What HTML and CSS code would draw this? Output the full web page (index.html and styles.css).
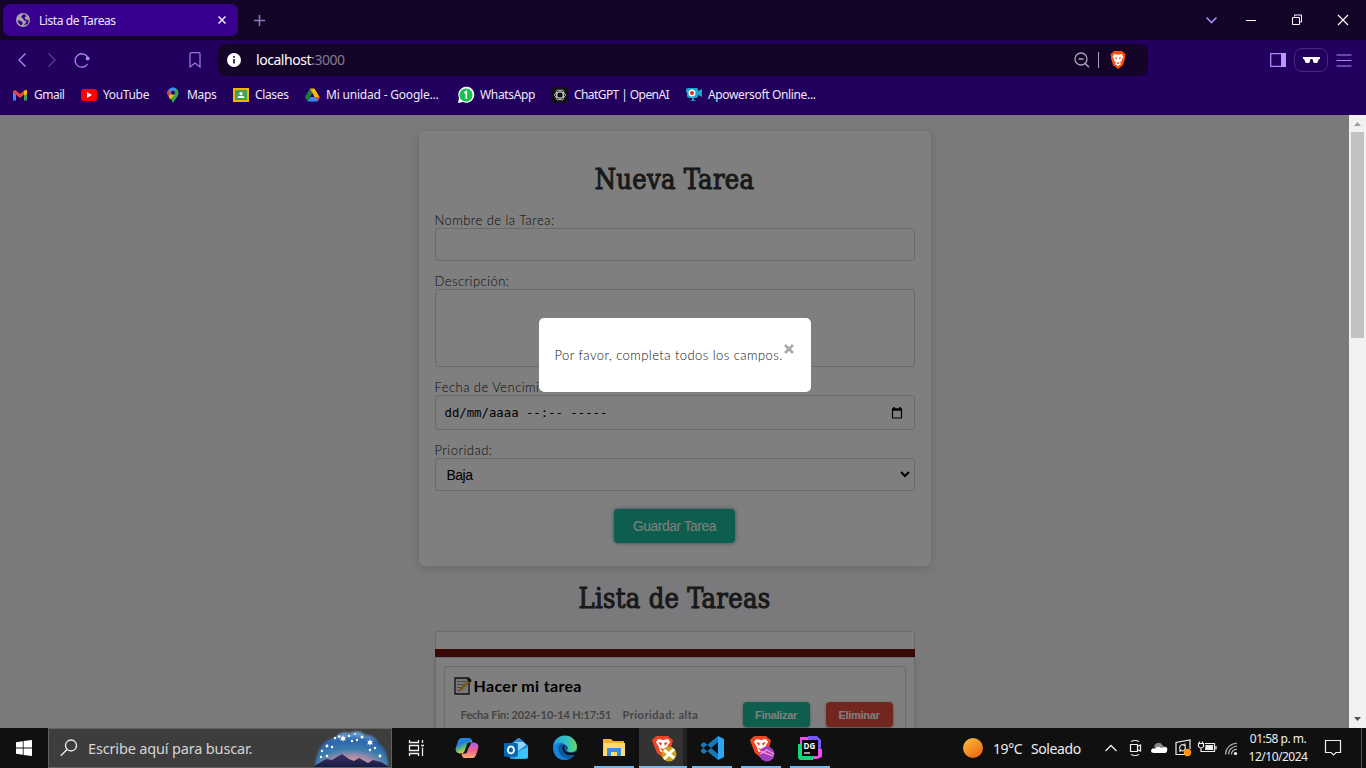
FILE: index.html
```html
<!DOCTYPE html>
<html lang="es">
<head>
<meta charset="utf-8">
<title>Lista de Tareas</title>
<link rel="stylesheet" href="styles.css">
</head>
<body>
<div class="desktop">
  <header class="browser">
    <div class="tabs">
      <div class="tab">
        <svg width="14" height="14" viewBox="0 0 14 14"><circle cx="7" cy="7" r="7" fill="#a6a3a9"/><path d="M7 1.500 5 4l2 1.500 1 2L10.500 8 9 11l-2 1.500L12 11l.5-4-3-.5-1-2 2-1.500L8 1zM1.500 7l3 1 2 1v2L5 12.500 2.500 10z" fill="#39008f"/></svg>
        <span class="tab-title">Lista de Tareas</span>
        <svg class="tab-close" width="8" height="8" viewBox="0 0 8 8"><path d="m.5.5 7 7m0-7-7 7" stroke="#e8e0ff" stroke-width="1.600"/></svg>
      </div>
      <svg class="plus" width="11" height="11" viewBox="0 0 11 11"><path d="M5.500 0v11M0 5.500h11" stroke="#8a78b8" stroke-width="1.500"/></svg>
      <div class="window-controls">
        <svg width="46" height="40" viewBox="0 0 46 40"><path d="m18.500 17.500 5 5 5-5" fill="none" stroke="#a78bfa" stroke-width="1.600"/></svg>
        <svg width="46" height="40" viewBox="0 0 46 40"><path d="M12 20.500h10" stroke="#fff"/></svg>
        <svg width="46" height="40" viewBox="0 0 46 40"><path d="M12.500 17.500h7v7h-7zm2-1v-1.500h7v7H20" fill="none" stroke="#fff"/></svg>
        <svg width="46" height="40" viewBox="0 0 46 40"><path d="m12 15 10 10m0-10L12 25" stroke="#fff" stroke-width="1.200"/></svg>
      </div>
    </div>
    <div class="toolbar">
      <div class="nav">
        <svg width="8" height="14" viewBox="0 0 8 14"><path d="M7.500.5 1 7l6.500 6.500" fill="none" stroke="#a78bfa" stroke-width="1.300"/></svg>
        <svg width="8" height="14" viewBox="0 0 8 14"><path d="M.5.5 7 7 .5 13.500" fill="none" stroke="#5c3a9c" stroke-width="1.300"/></svg>
        <svg width="16" height="16" viewBox="0 0 16 16"><path d="M13.500 12A6.700 6.700 0 1 1 14 6" fill="none" stroke="#a78bfa" stroke-width="1.300"/><circle cx="13.700" cy="6.500" r="1.900" fill="#a78bfa"/></svg>
      </div>
      <svg class="save" width="12" height="16" viewBox="0 0 12 16"><path d="M1 2q0-1.300 1.300-1.300h7.400Q11 .7 11 2v13l-5-4-5 4z" fill="none" stroke="#9678e0" stroke-width="1.300"/></svg>
      <div class="address">
        <svg width="14" height="14" viewBox="0 0 14 14"><circle cx="7" cy="7" r="7" fill="#fff"/><path d="M7 6v4.500M7 3v1.700" stroke="#160427" stroke-width="1.600"/></svg>
        <span class="url">localhost<span class="port">:3000</span></span>
        <svg class="zoom" width="17" height="16" viewBox="0 0 17 16"><path d="M10.700 11 15 15.300M4.500 7h5" stroke="#aaa3b3" stroke-width="1.500"/><circle cx="7" cy="7" r="6" fill="none" stroke="#aaa3b3" stroke-width="1.300"/></svg>
        <span class="sep"></span>
        <svg class="shield" width="16" height="18" viewBox="0 0 16 18"><path d="M4 0h8l1.500 1.500L15.500 3l-.7 3 .3 1-2 7L8 18l-5-4L.9 7l.3-1-.7-3 2-1.500z" fill="#fb4f12"/><path d="m4.500 3 3.500.7 3.500-.7 2 2.800-1.800 3 .5 1.200-2.400 1L11 13l-3 2-3-2 1.200-2-2.400-1 .5-1.200-1.800-3z" fill="#fff"/><path d="m4.500 6 2.500.8-.5 2zm7 0L9 6.800l.5 2zM6.500 12 8 11l1.500 1L8 13.200z" fill="#fb4f12"/></svg>
      </div>
      <div class="actions">
        <svg width="16" height="14" viewBox="0 0 16 14"><path d="M.7.7h14.600v12.600H.7z" fill="none" stroke="#a78bfa" stroke-width="1.300"/><path d="M11 0h5v14h-5z" fill="#b49cff"/></svg>
        <span class="private"><svg width="17" height="7" viewBox="0 0 17 7"><path d="M0 0h17v2h-1l-1.500 3.500q-2 1-4 0L9.500 2h-2l-1 3.500q-2 1-4 0L1 2H0z" fill="#fff"/></svg></span>
        <svg width="16" height="13" viewBox="0 0 16 13"><path d="M.5 1h15M.5 6.500h15M.5 12h15" stroke="#a78bfa" stroke-width="1.200"/></svg>
      </div>
    </div>
    <nav class="bookmarks">
      <span class="bm gmail"><svg viewBox="0 0 16 16"><path d="M1.500 13.500V4" stroke="#4285f4" stroke-width="3"/><path d="M12.500 13.500V4" stroke="#34a853" stroke-width="3"/><path d="m1 4 6 5 6-5" fill="none" stroke="#ea4335" stroke-width="3"/><path d="M11 6.500V4l3-1.300V7l-3 1.500z" fill="#fbbc04"/></svg>Gmail</span>
      <span class="bm"><svg viewBox="0 0 16 16"><rect y="2" width="16" height="12" rx="3" fill="#f00"/><path d="m6 5 5 3-5 3z" fill="#fff"/></svg>YouTube</span>
      <span class="bm"><svg viewBox="0 0 16 16"><path d="M2.500 6a5.500 5.500 0 0 1 11 0q0 2.500-3 6L8 16l-2-4Q2.500 8.500 2.500 6" fill="#34a853"/><path d="M2.500 6A5.500 5.500 0 0 1 11 1.500L4.500 9Q2.500 7.500 2.500 6" fill="#4285f4"/><path d="m3 3 3 2.500-3 3.500Q1.500 6 3 3" fill="#ea4335"/><path d="m10 7.500-5 5L3.700 9.500 6 7z" fill="#fbbc04"/><circle cx="8" cy="5.800" r="2" fill="#22005e"/></svg>Maps</span>
      <span class="bm"><svg viewBox="0 0 16 16"><path d="M0 1h16v14H0z" fill="#f4b400"/><path d="M2 3h12v10H2z" fill="#45a05b"/><circle cx="8" cy="6.500" r="1.600" fill="#fff"/><path d="M4.500 11q0-2.300 3.500-2.300t3.500 2.300z" fill="#fff"/></svg>Clases</span>
      <span class="bm drive"><svg viewBox="0 0 16 16"><path d="M5 1.500 0 10l2.500 4.500L7.500 5.500z" fill="#188038"/><path d="M5 1.500h4.500l5 8.500h-5z" fill="#fbbc04"/><path d="M5.500 10H15l-2.500 4.500h-10z" fill="#4285f4"/><path d="M11 10h4l-2.500 4.500z" fill="#ea4335"/></svg>Mi unidad - Google...</span>
      <span class="bm"><svg viewBox="0 0 16 16"><path d="M0 16 1 11A8 8 0 1 1 5 15z" fill="#fff"/><circle cx="8" cy="8" r="6.600" fill="#14c24b"/><path d="m6.300 6 2-1.500V12" fill="none" stroke="#fff" stroke-width="1.600"/></svg>WhatsApp</span>
      <span class="bm chat"><svg viewBox="0 0 16 16"><rect width="16" height="16" rx="3" fill="#111"/><g fill="none" stroke="#ddd" stroke-width=".8"><ellipse cx="8" cy="8" rx="5.500" ry="3"/><ellipse cx="8" cy="8" rx="5.500" ry="3" transform="rotate(60 8 8)"/><ellipse cx="8" cy="8" rx="5.500" ry="3" transform="rotate(120 8 8)"/></g></svg>ChatGPT | OpenAI</span>
      <span class="bm"><svg viewBox="0 0 16 16"><path d="M2 1h9q1 0 1 2v1l4-2v8l-4-2v1q0 2-2 2H8v2l3 1H4l2-1v-2H3q-2 0-2-2V6L0 5V2z" fill="#18a8c8"/><circle cx="6" cy="6" r="3.500" fill="#fff"/><circle cx="6" cy="6" r="2" fill="#e22"/></svg>Apowersoft Online...</span>
    </nav>
  </header>

  <main class="viewport">
    <div class="page">
      <form class="card">
        <h2 class="heading form-heading">Nueva Tarea</h2>
        <label class="label">Nombre de la Tarea:</label>
        <div class="field name-field"></div>
        <label class="label">Descripción:</label>
        <div class="field desc-field"></div>
        <label class="label">Fecha de Vencimiento:</label>
        <div class="field date-field"><span>dd/mm/aaaa --:-- -----</span><svg width="12" height="12" viewBox="0 0 12 12"><path d="M1.500 2h9v9h-9z" fill="none" stroke="#000" stroke-width="1.200"/><path d="M1 1.500h10v2.300H1zM2.500 0H4v2H2.500zm5.500 0h1.500v2H8z"/></svg></div>
        <label class="label">Prioridad:</label>
        <div class="field select-field"><span>Baja</span><svg width="10" height="7" viewBox="0 0 10 7"><path d="m1 1 4 4 4-4" fill="none" stroke="#000" stroke-width="2"/></svg></div>
        <div class="submit">Guardar Tarea</div>
      </form>
      <h2 class="heading list-heading">Lista de Tareas</h2>
      <div class="list-head"></div>
      <div class="band"></div>
      <div class="list">
        <article class="task">
          <h3 class="task-title"><svg width="18" height="18" viewBox="0 0 18 18"><path d="M1 1h14v16H1z" fill="#eee" stroke="#222" stroke-width="1.300"/><path d="M3 4.500h9M3 7.500h8M3 10.500h6M3 13.500h4" stroke="#999"/><path d="m14 3 2 2-8 8-3 1 1-3z" fill="#e8b22a"/><path d="m13 2 4 0 .5 2.500-2 1-2-2z" fill="#222"/></svg>Hacer mi tarea</h3>
          <div class="task-row"><span class="due">Fecha Fin: 2024-10-14 H:17:51</span><span class="priority">Prioridad: alta</span><span class="btn done">Finalizar</span><span class="btn delete">Eliminar</span></div>
        </article>
      </div>
    </div>
    <div class="scrollbar"><svg width="17" height="17" viewBox="0 0 17 17"><path d="m5 11 3.500-4 3.500 4z" fill="#a0a0a0"/></svg><div class="thumb"></div><svg width="17" height="17" viewBox="0 0 17 17"><path d="m5 6 3.500 4L12 6z" fill="#505050"/></svg></div>
    <div class="overlay">
      <div class="modal"><span class="message">Por favor, completa todos los campos.</span><svg class="close" width="10" height="10" viewBox="0 0 10 10"><path d="m1 1 8 8m0-8L1 9" stroke="#aaa" stroke-width="2.700"/></svg></div>
    </div>
  </main>

  <footer class="taskbar">
    <div class="start"><svg width="16" height="16" viewBox="0 0 16 16"><path d="M0 2.200 6.800 1.200V7.500H0zM7.600 1.100 16 0v7.500H7.600zM0 8.400h6.800v6.400L0 13.800zm7.600 0H16V16l-8.400-1.100z" fill="#fff"/></svg></div>
    <div class="search">
      <svg width="18" height="18" viewBox="0 0 18 18"><circle cx="11" cy="6.500" r="5.500" fill="none" stroke="#eee" stroke-width="1.300"/><path d="M7 10.500.8 16.700" stroke="#eee" stroke-width="1.400"/></svg>
      <span class="search-text">Escribe aquí para buscar.</span>
      <svg class="scene" width="78" height="36" viewBox="0 0 78 36">
        <defs><radialGradient id="sky" cx=".5" cy="1" r=".95"><stop offset="0" stop-color="#e9a58a"/><stop offset=".3" stop-color="#b58fa8"/><stop offset=".52" stop-color="#3c7fae"/><stop offset=".8" stop-color="#2a62ae"/><stop offset="1" stop-color="#6ea5d6"/></radialGradient><linearGradient id="hill" x2="0" y2="1"><stop stop-color="#41315f"/><stop offset="1" stop-color="#151b45"/></linearGradient><filter id="soft"><feGaussianBlur stdDeviation="1.300"/></filter></defs>
        <path d="M2 36Q4 18 11 12q7-5 11-5 5-7 15-5 9-4 15 2 10 0 13 8 10 6 10 24z" fill="url(#sky)" filter="url(#soft)"/>
        <path d="M0 36 8 31l5-3 6 1 5-3 5-3 7 5 5 2 5-3 9 5 5-3 8 2 8 5z" fill="url(#hill)"/>
        <g fill="#fffbe8"><path d="m30 4 .8 2 2.200-.3L31.700 7.500l1.300 2-2.200-.4L30 11l-.8-1.900-2.200.4 1.300-2L27 5.700l2.200.3zm27 4 .8 2 2.200-.3-1.300 1.800 1.300 2-2.200-.4L57 15l-.8-1.900-2.200.4 1.300-2L54 9.700l2.200.3z"/><circle cx="22" cy="7" r="1.200"/><circle cx="26" cy="5.500" r="1.200"/><circle cx="36" cy="5" r="1.200"/><circle cx="42" cy="3" r=".9"/><circle cx="49" cy="6" r="1.500"/><circle cx="39" cy="10" r="1.200"/><circle cx="44" cy="9" r="1.200"/><circle cx="14" cy="15" r="1.400"/><circle cx="19" cy="16" r="1.200"/><circle cx="9" cy="20" r="1.200"/><circle cx="14" cy="25" r="1.300"/><circle cx="8" cy="26" r="1.200"/><circle cx="57" cy="19" r="1.200"/><circle cx="62" cy="17" r="1.200"/><circle cx="67" cy="25" r="1.400"/></g>
      </svg>
    </div>
    <div class="task-view"><svg width="17" height="16" viewBox="0 0 17 16"><path d="M1.500 0v2.500h9V0M1.500 5.500h9v5h-9zM1.500 16v-2.500h9V16M14.500 0v3m0 4.500V16M13 5.500h3" fill="none" stroke="#eee" stroke-width="1.300"/></svg></div>
    <div class="apps">
      <div class="app"><svg width="24" height="22" viewBox="0 0 26 24"><defs><linearGradient id="cp1" x2=".5" y2="1"><stop stop-color="#16a5e8"/><stop offset=".4" stop-color="#1f78e0"/><stop offset=".7" stop-color="#67c165"/><stop offset="1" stop-color="#f4d23a"/></linearGradient><linearGradient id="cp2" x2="0" y2="1"><stop stop-color="#a65bea"/><stop offset=".5" stop-color="#f45f8c"/><stop offset="1" stop-color="#ffae72"/></linearGradient></defs><path d="M8 1h8q2 0 3 5l-4 0q-2 0-3 5l-2 5q-1 2-5 2-6-1-4-7l2-6q1-4 5-4" fill="url(#cp1)"/><path d="M18 6h3q6 1 4 7l-2 6q-1 4-5 4h-8q-2 0-3-5h4q2 0 3-5z" fill="url(#cp2)"/></svg></div>
      <div class="app"><svg width="24" height="23" viewBox="0 0 26 24"><path d="m6 9 10-8 10 8v12q0 2-2 2H8q-2 0-2-2z" fill="#1a7cca"/><path d="m6 8 9-7q1-.6 2 0l9 8-10 7-8-4z" fill="#2a8bd8"/><path d="M12 5h9l3 3-9 7-6-6z" fill="#8fd4fa"/><path d="m26 10-18 9v2q0 2 2 2h14q2 0 2-2z" fill="#39c4f3"/><path d="m6 8 8 10-3 5H8q-2 0-2-2z" fill="#2897df"/><rect y="6" width="15" height="15" rx="1.500" fill="#0866b8"/><ellipse cx="7.500" cy="13.500" rx="3.300" ry="3.800" fill="none" stroke="#fff" stroke-width="2"/></svg></div>
      <div class="app"><svg width="24" height="24" viewBox="0 0 24 24"><defs><linearGradient id="edge"><stop stop-color="#249ee0"/><stop offset=".6" stop-color="#35c4c0"/><stop offset="1" stop-color="#6bd657"/></linearGradient></defs><circle cx="12" cy="12" r="12" fill="#0c59a4"/><path d="M0 12A12 12 0 0 1 24 11q0 5-6 5-4 0-4-2 2-2 0-4Q9 5 3 8 0 10 0 12" fill="url(#edge)"/><path d="M0 12q1-6 8-5-5 5-1 11 3 5 10 5Q2 27 0 12" fill="#1684d8"/><path d="M10 14q-2-4 2-5-3 7 6 8 3 0 6-2v3l-3 1-4 0q-6 0-7-5" fill="#101010"/></svg></div>
      <div class="app open"><svg width="22" height="20" viewBox="0 0 22 20"><path d="M0 1h8l2 2h11v15H0z" fill="#f4b32d"/><path d="M1 5h21v13H0z" fill="#ffda6c"/><path d="M4 11q0-1 1-1h12q1 0 1 1v7h-4v-4H8v4H4z" fill="#2f91df"/></svg></div>
      <div class="app open active"><svg width="24" height="25" viewBox="0 0 24 25"><path d="M4 0h11l2 2 3 2-1 4-2 9-7 5-6-5L0 7l-1-3 3-3z" fill="#f04524"/><path d="m5 3 5 1 5-1 2 3-3 5-1 4-3 2-3-2-1-4-3-5z" fill="#fff"/><path d="m5 6 4 1-1 3zm10 0-4 1 1 3zM7 12l3 1 3-1-3 4z" fill="#f04524"/><circle cx="16" cy="18" r="7.500" fill="#c7a51e"/><path d="m11 14 10 8m0-9-10 10" stroke="#fff" stroke-width="3"/></svg></div>
      <div class="app open"><svg width="24" height="24" viewBox="0 0 24 24"><path d="m1 8 3-2 14 12v6L1 10zm0 8 3 2L18 6V0L1 14z" fill="#1679bd"/><path d="m18 0 6 3v18l-6 3z" fill="#28a8f0"/></svg></div>
      <div class="app open"><svg width="24" height="25" viewBox="0 0 24 25"><path d="M4 0h11l2 2 3 2-1 4-2 9-7 5-6-5L0 7l-1-3 3-3z" fill="#f04524"/><path d="m5 3 5 1 5-1 2 3-3 5-1 4-3 2-3-2-1-4-3-5z" fill="#fff"/><path d="m5 6 4 1-1 3zm10 0-4 1 1 3zM7 12l3 1 3-1-3 4z" fill="#f04524"/><circle cx="16" cy="18" r="7.500" fill="#a13fc4"/><path d="m9 18 7-4 7 4m-14-3 13 5" fill="none" stroke="#ff9bd0" stroke-width="1.300"/></svg></div>
      <div class="app open"><svg width="24" height="24" viewBox="0 0 24 24"><path d="M2 1h17v15H2z" fill="#f34bea"/><path d="M10 0h9l4 4v10L10 8z" fill="#7456fa"/><path d="M0 8h15v16H3q-3 0-3-3z" fill="#0bd975"/><path d="M15 13h9v8l-5 2h-4z" fill="#f34bea"/><path d="M4 4h16v16H4z" fill="#050505"/><text x="5.500" y="12.500" class="dg">DG</text><path d="M6 17h6" stroke="#fff" stroke-width="1.200"/></svg></div>
    </div>
    <div class="tray">
      <span class="sun"></span><span class="temperature">19°C</span><span class="weather">Soleado</span>
      <div class="tray-icons">
        <svg viewBox="0 0 24 20"><path d="m6.500 13 5.500-5.500 5.500 5.500" fill="none" stroke="#eee" stroke-width="1.300"/></svg>
        <svg viewBox="0 0 24 20"><path d="M7.500 6.500h7v7h-7zm7 2 3-1.500v6l-3-1.500M8 3.500q4-2 8 0M8 16.500q4 2 8 0" fill="none" stroke="#eee" stroke-width="1.200"/></svg>
        <svg viewBox="0 0 24 20"><path d="M7 9q1-4 4-4 3-1 5 3l3 1-4 4z" fill="#888"/><path d="M4 12.500q1-3 4-2 3-3 6-.5l5-1q2 1 1 4 0 2-2 2H7q-3 0-3-2.500" fill="#fff"/></svg>
        <svg viewBox="0 0 24 20"><path d="M14 16.500H5v-12L19 2v9M8.500 10.500Q9 6.500 12 6.500l2 1.500V5.500M14.500 9q-.5 4-3 4L9 11.500v2.500" fill="none" stroke="#eee" stroke-width="1.200"/><circle cx="16.500" cy="14.500" r="3.700" fill="#ff980d"/></svg>
        <svg viewBox="0 0 24 20"><path d="M10 5.500h9.500v8H8M21 8v3.500M3.500 5.500h5v3q-1 1.500-2.500 1.500T3.500 8.500zM4.500 3.500v2m3-2v2M6 10v3.500h3" fill="none" stroke="#eee" stroke-width="1.200"/><path d="M10.500 7h7.500v5h-8z" fill="#eee"/></svg>
        <svg viewBox="0 0 24 20"><path d="M6.500 16.500Q7 6.500 18 5M9.500 16.500q0-7 8.500-8.500M12.500 16.500q0-4.500 5.500-5.500" fill="none" stroke="#bbb" stroke-width="1.200"/><circle cx="16.500" cy="15.500" r="1.600" fill="#fff"/></svg>
      </div>
      <div class="clock"><span class="time">01:58 p. m.</span><span>12/10/2024</span></div>
      <svg class="notice" width="16" height="16" viewBox="0 0 16 16"><path d="M.5.5h15v12H11L8.500 15 6 12.500H.5z" fill="none" stroke="#eee" stroke-width="1.200"/></svg>
      <span class="peek"></span>
    </div>
  </footer>
</div>
</body>
</html>
```

FILE: styles.css
```css
* { box-sizing: border-box; }
body { margin: 0; overflow: hidden; font-family: "Noto Sans", "Open Sans", sans-serif; }
svg { display: block; flex: none; overflow: visible; }
.desktop { width: 1366px; height: 768px; display: grid; grid-template-rows: 115px 613px 40px; overflow: hidden; white-space: nowrap; }

.browser { background: #22005e; color: #eee8f8; font-size: 12px; display: grid; grid-template-rows: 40px 40px 35px; }
.tabs { background: #140427; display: flex; align-items: center; padding-left: 3px; }
.tab { width: 235px; height: 32px; background: #39008f; border-radius: 7px; display: flex; align-items: center; padding: 0 12px 0 13px; }
.tab-title { margin-left: 9px; letter-spacing: -.42px; }
.tab-close { margin-left: auto; }
.plus { margin-left: 16px; }
.window-controls { display: flex; margin: 0 -6px 0 auto; }

.toolbar { display: flex; align-items: center; }
.nav { display: flex; align-items: center; gap: 22px; padding-left: 18px; width: 189px; }
.nav svg:last-child { margin-left: -4px; }
.address { margin-left: 17px; width: 930px; height: 32px; border-radius: 8px; background: #140427; display: flex; align-items: center; padding: 0 22px 0 9px; }
.url { margin: -2px 0 0 15px; font-size: 14px; letter-spacing: -.45px; color: #fff; }
.port { color: #837b8d; }
.zoom { margin-left: auto; }
.sep { width: 1px; height: 16px; background: #aaa3b3; margin: 0 11px 0 7px; }
.actions { display: flex; align-items: center; margin-left: 122px; }
.private { width: 34px; height: 24px; border: 1px solid #46287e; border-radius: 8px; display: flex; align-items: center; justify-content: center; margin: 0 8px; }
.bookmarks { display: grid; grid-template-columns: 68px 84px 68px 72px 153px 94px 134px 150px; padding: 4px 0 0 13px; }
.bm { display: flex; gap: 6px; height: 21px; align-items: center; letter-spacing: -.35px; }
.bm svg { width: 16px; height: 16px; }
.gmail { gap: 5px; letter-spacing: -.5px; }
.drive { gap: 5px; letter-spacing: -.2px; }
.chat { letter-spacing: -.58px; }

.viewport { position: relative; display: grid; grid-template-columns: 1349px 17px; overflow: hidden; background: #f4f4f9; }
.page { height: 613px; overflow: hidden; display: flex; flex-direction: column; align-items: center; padding-top: 16px; font-family: Lato, sans-serif; }
.card { width: 512px; height: 435px; flex: none; background: #fff; border-radius: 6px; box-shadow: 0 2px 8px rgba(0,0,0,.15); padding: 29px 16px 0; display: flex; flex-direction: column; }
.heading { margin: 0; font-family: "DejaVu Serif Condensed", "DejaVu Serif", serif; font-stretch: condensed; font-weight: 400; -webkit-text-stroke: 1px #333; font-size: 27px; line-height: 40px; color: #333; text-align: center; letter-spacing: .3px; }
.form-heading { margin-bottom: 12px; }
.label { height: 16px; font-size: 13px; font-weight: 300; line-height: 16px; color: #111; letter-spacing: .45px; }
.field { border: 1px solid #d6d6d6; border-radius: 3px; background: #fff; display: flex; align-items: center; color: #000; }
.name-field { height: 33px; margin-bottom: 12px; }
.desc-field { height: 78px; margin-bottom: 12px; }
.date-field { height: 35px; margin-bottom: 12px; padding: 0 11px 0 9px; justify-content: space-between; font: 12.300px "DejaVu Sans Mono", monospace; }
.select-field { height: 33px; padding: 0 4px 0 11px; justify-content: space-between; font: 14px "Liberation Sans", sans-serif; letter-spacing: -.5px; }
.submit { width: 121px; height: 34px; align-self: center; margin-top: 18px; border-radius: 4px; background: #1abc9c; box-shadow: 0 0 4px rgba(30,70,120,.6); color: #fff; font: 13.800px/35px "Liberation Sans", sans-serif; letter-spacing: -.45px; text-align: center; }
.list-heading { margin-top: 13px; height: 52px; flex: none; }
.list-head { width: 480px; height: 18px; flex: none; border: 1px solid #d6d6d6; border-bottom: 0; border-radius: 3px 3px 0 0; background: #fff; }
.band { width: 480px; height: 8px; flex: none; background: #740f0f; }
.list { width: 480px; height: 100px; flex: none; background: #fff; border: 1px solid #d6d6d6; box-shadow: 0 2px 6px rgba(0,0,0,.12); padding: 8px; }
.task { height: 90px; border: 1px solid #d6d6d6; border-radius: 3px; box-shadow: 0 1px 3px rgba(0,0,0,.1); padding: 10px 12px 0 9px; }
.task-title { margin: 0; display: flex; gap: 2px; align-items: center; height: 18px; font-size: 16px; line-height: 16px; font-weight: 700; letter-spacing: .33px; }
.task-row { display: flex; align-items: center; height: 26px; margin-top: 6px; padding-left: 7px; font-size: 11px; font-weight: 700; color: #888; }
.due { width: 162px; letter-spacing: -.1px; }
.priority { width: 120px; letter-spacing: .5px; }
.btn { width: 67px; height: 25px; border-radius: 4px; font: 700 11px/26px "Liberation Sans", sans-serif; letter-spacing: -.3px; color: #fff; text-align: center; box-shadow: 0 1px 3px rgba(0,0,0,.4); }
.done { background: #1abc9c; }
.delete { background: #e74c3c; margin-left: 16px; }

.scrollbar { background: #f1f1f1; display: flex; flex-direction: column; align-items: center; }
.scrollbar svg:last-child { margin-top: auto; }
.thumb { width: 13px; height: 206px; background: #c1c1c1; }
.overlay { position: absolute; inset: 0 17px 0 0; background: rgba(0,0,0,.5); display: flex; justify-content: center; padding-top: 203px; }
.modal { width: 272px; height: 74px; border-radius: 5px; background: #fff; display: flex; padding: 0 17px 0 16px; justify-content: space-between; font: 300 13px/75px Lato, sans-serif; color: #111; letter-spacing: .44px; }
.close { margin-top: 26px; }

.taskbar { background: #101010; color: #eee; display: flex; }
.start { width: 48px; display: flex; align-items: center; justify-content: center; }
.search { width: 344px; border: 1px solid #606060; background: #3d3d3d; display: flex; align-items: center; padding-left: 11px; overflow: hidden; }
.search-text { margin-left: 10px; font-size: 14.500px; letter-spacing: -.16px; color: #d5d5d5; }
.scene { margin: 2px 0 0 auto; }
.task-view { width: 50px; padding-right: 2px; display: flex; align-items: center; justify-content: center; }
.apps { display: flex; }
.app { width: 49px; display: flex; align-items: center; justify-content: center; }
.open { background: linear-gradient(#76b9ed, #76b9ed) 5px 100% / 40px 2px no-repeat; }
.active { padding-left: 4px; background: linear-gradient(#76b9ed, #76b9ed) 1px 100% / 48px 2px no-repeat, linear-gradient(90deg, #101010 1px, #333 1px 45px, #222 45px); }
.active + .app + .app { padding-left: 4px; }
.dg { font: 700 8px "Open Sans", sans-serif; fill: #fff; }
.tray { flex: 1; display: flex; align-items: center; padding-left: 129px; }
.sun { width: 20px; height: 20px; border-radius: 50%; background: linear-gradient(145deg, #f8c33d, #ee5b0e); }
.temperature, .weather { font-size: 14px; letter-spacing: -.4px; }
.temperature { margin-left: 10px; width: 38px; }
.weather { width: 68px; }
.tray-icons { display: flex; }
.tray-icons svg { width: 24px; height: 20px; }
.clock { width: 70px; display: flex; flex-direction: column; align-items: center; font-size: 12px; line-height: 18px; letter-spacing: -.5px; }
.notice { margin-left: 12px; }
.peek { width: 1px; height: 40px; background: #555; margin-left: 20px; }
```
